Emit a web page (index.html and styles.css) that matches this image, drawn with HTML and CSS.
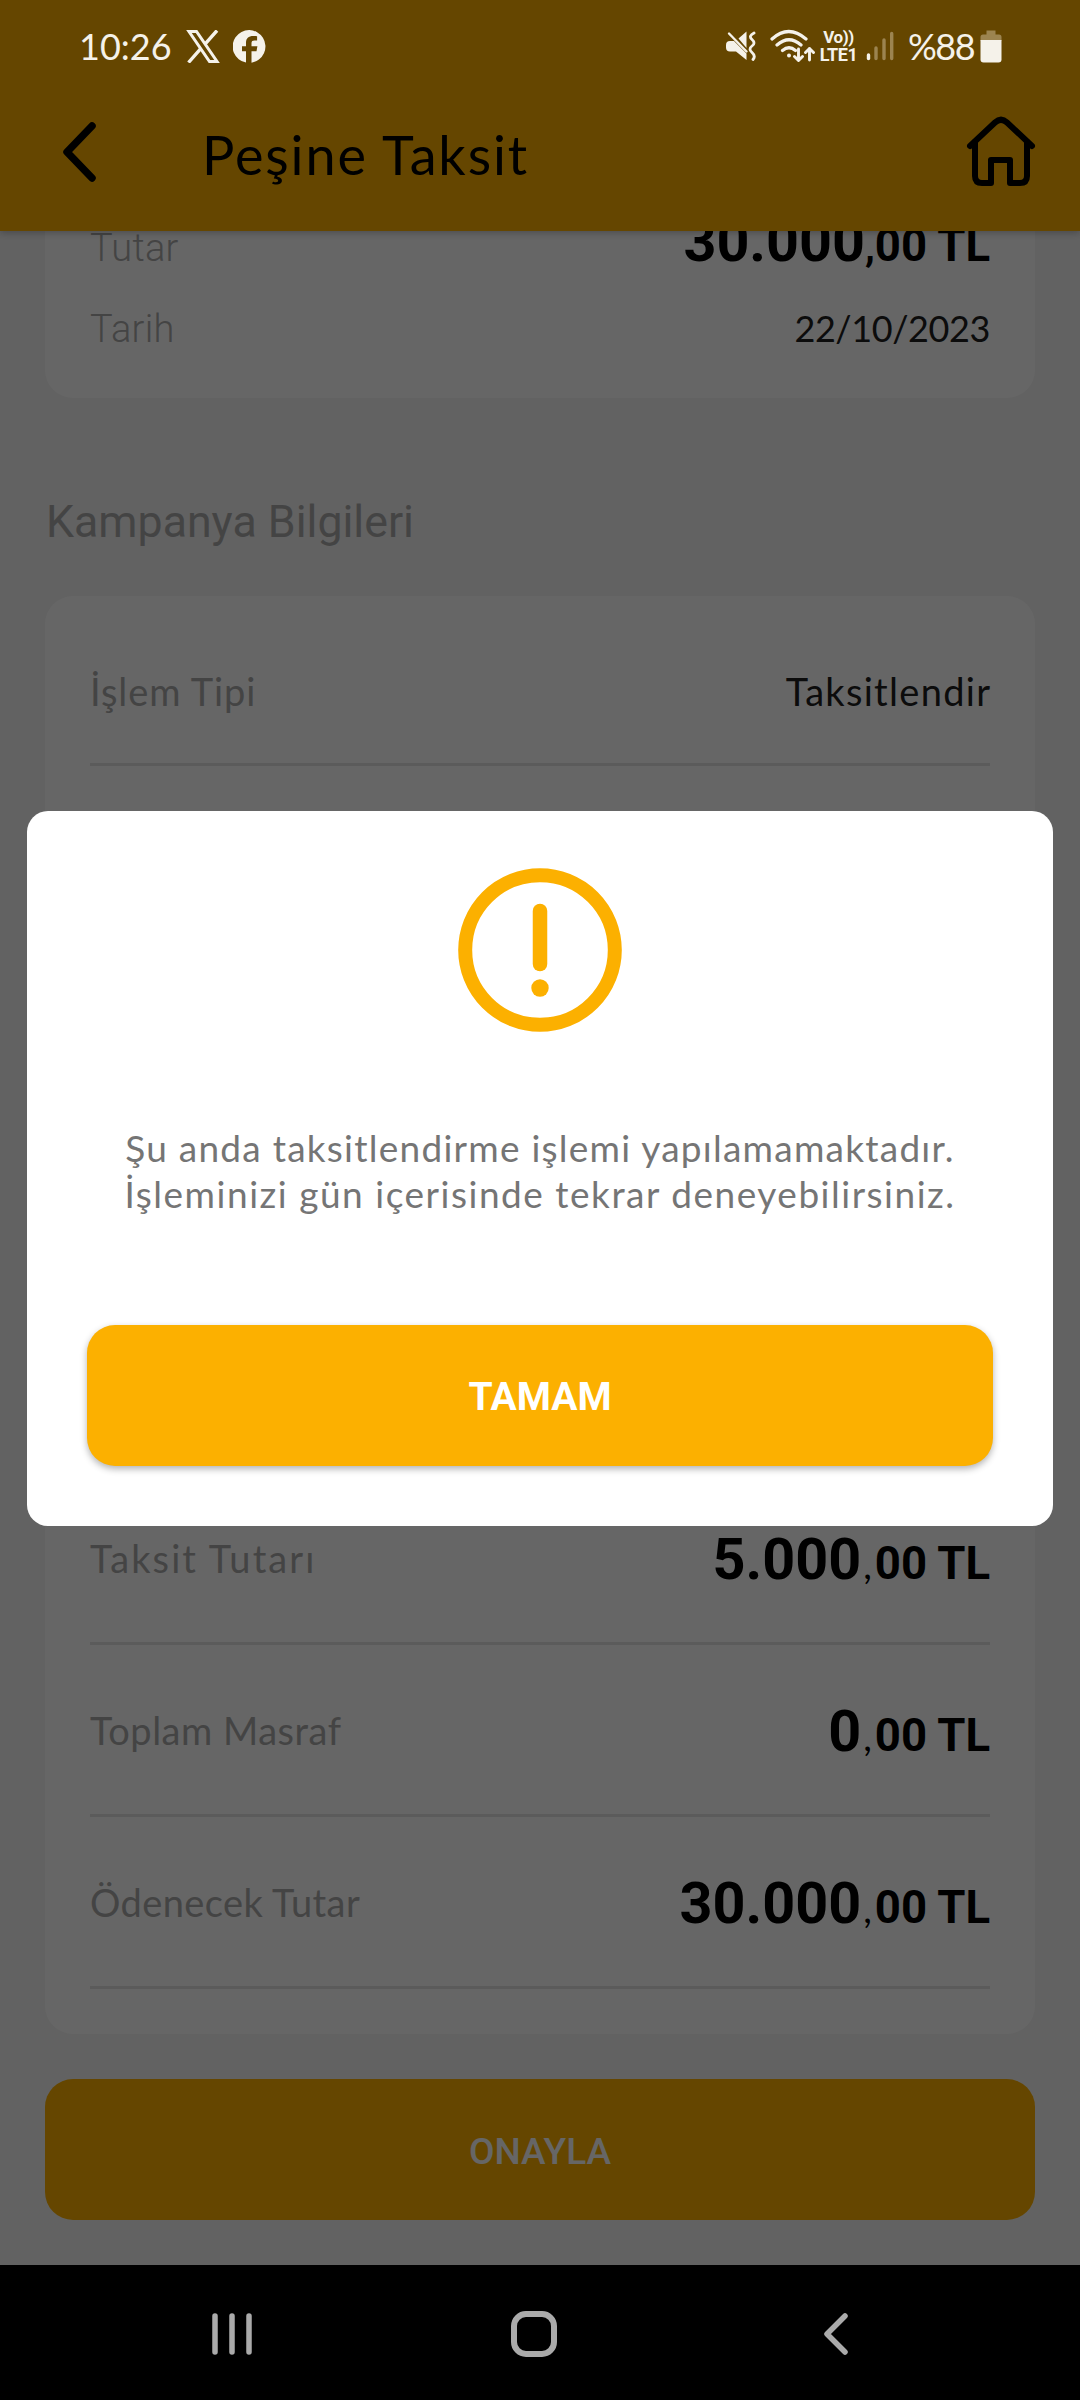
FILE: index.html
```html
<!DOCTYPE html>
<html lang="tr">
<head>
<meta charset="utf-8">
<title>Peşine Taksit</title>
<link rel="stylesheet" href="styles.css">
</head>
<body>
<div class="phone">
  <div class="app">
    <header class="toolbar">
      <svg class="back" width="34" height="60" viewBox="0 0 34 60"><path d="M30 4 5 30l25 26" fill="none" stroke="#000" stroke-width="7.5" stroke-linecap="round" stroke-linejoin="round"/></svg>
      <h1 class="title hand">Peşine Taksit</h1>
      <svg class="home" width="70" height="70" viewBox="0 0 70 70" fill="none" stroke="#000" stroke-width="6" stroke-linecap="round" stroke-linejoin="round"><path d="M4 30 29 6.500q6-5.500 12 0L66 30"/><path d="M9 26v34q0 7 7 7h9V44h19v23h10q7 0 7-7V26"/></svg>
    </header>
    <main class="content">
      <section class="card card-top">
        <div class="line"><span class="label-light">Tutar</span><span class="amount"><b>30.000</b><i class="comma-plain">,</i>00 TL</span></div>
        <div class="line"><span class="label-light">Tarih</span><span class="value hand date">22/10/2023</span></div>
      </section>
      <h2 class="section-title">Kampanya Bilgileri</h2>
      <section class="card card-info">
        <div class="row first"><span class="label hand l-type">İşlem Tipi</span><span class="value hand type">Taksitlendir</span></div>
        <div class="covered"></div>
        <div class="row"><span class="label hand l-inst">Taksit Tutarı</span><span class="amount"><b>5.000</b><i class="comma">,</i>00 TL</span></div>
        <div class="row"><span class="label hand l-cost">Toplam Masraf</span><span class="amount"><b>0</b><i class="comma">,</i>00 TL</span></div>
        <div class="row"><span class="label hand l-total">Ödenecek Tutar</span><span class="amount"><b>30.000</b><i class="comma">,</i>00 TL</span></div>
      </section>
      <button class="confirm">ONAYLA</button>
    </main>
    <div class="scrim">
      <div class="dialog">
        <svg class="alert" width="164" height="164" viewBox="0 0 164 164"><circle cx="82" cy="82" r="74.800" fill="none" stroke="#fcb000" stroke-width="14"/><path d="M82 43v53" stroke="#fcb000" stroke-width="14.500" stroke-linecap="round"/><circle cx="82" cy="120" r="8.700" fill="#fcb000"/></svg>
        <p class="message hand"><span class="m1">Şu anda taksitlendirme işlemi yapılamamaktadır.</span><br><span class="m2">İşleminizi gün içerisinde tekrar deneyebilirsiniz.</span></p>
        <button class="ok">TAMAM</button>
      </div>
    </div>
  </div>
  <div class="status">
    <span class="clock hand">10:26</span>
    <svg class="x-logo" width="34" height="33" viewBox="0 0 34 33"><path d="M3 1.500h7.500L31 31.500h-7.500z" fill="none" stroke="#f5f2ea" stroke-width="3"/><path d="M31 .5 18.800 14.300M14.500 18.800 2.500 32.500" stroke="#f5f2ea" stroke-width="3.400"/></svg>
    <svg class="fb" width="33" height="33" viewBox="0 0 33 33"><path fill="#f5f2ea" d="M13 32.600A16.400 16.400 0 1 1 18.500 32.700V21.200h5l.9-4.900h-5.900v-3.200c0-2 .9-2.700 2.900-2.700h2.700V6.300c-7.500-1.200-11.100.8-11.100 6.500v3.500H9v4.900h4z"/></svg>
    <span class="grow"></span>
    <svg class="mute" width="30" height="30" viewBox="0 0 30 30"><path fill="#f5f2ea" d="M4 10h4l12.500 12.500V29L10 20.500H4q-4 0-4-4V14q0-4 4-4zM12.500 7.500 20.500.5V17z"/><path d="m3 2.500 17.500 18" stroke="#f5f2ea" stroke-width="2.400" stroke-linecap="round"/><path d="M28 2q-6 3-2 6.500t0 6.500 0 6.500 1 7" fill="none" stroke="#f5f2ea" stroke-width="2.800" stroke-linecap="round"/></svg>
    <svg class="wifi" width="45" height="34" viewBox="0 0 45 34" fill="none" stroke="#f5f2ea" stroke-width="3.200" stroke-linecap="round" stroke-linejoin="round"><path d="M2 10q16.500-15 34 0M7 16q12-10.500 24 0M12.500 21.500q6.500-5.500 13 0"/><circle cx="19" cy="26.500" r="2" fill="#f5f2ea" stroke="none"/><path d="M28.500 20v11.500m-4-4 4 4 4-4M39.500 31V19.500m-4 4 4-4 4 4" stroke-width="2.900"/></svg>
    <span class="volte"><span class="vo">Vo))</span><span>LTE1</span></span>
    <svg class="signal" width="28" height="30" viewBox="0 0 28 30" stroke-width="3.400" stroke-linecap="round"><path d="M2.500 24v3.500" stroke="#f5f2ea"/><path d="M10 17v10.500M18 9v18.500M25.700 2.500v25" stroke="#9c8450"/></svg>
    <span class="percent hand">%88</span>
    <svg class="battery" width="22" height="33" viewBox="0 0 22 33"><path fill="#9c8450" d="M6.500.5h9v4H19q2.500 0 2.500 2.500v4H.5V7q0-2.500 2.500-2.500h3.500z"/><path fill="#f5f2ea" d="M.5 10h21v19.500q0 3-3 3h-15q-3 0-3-3z"/></svg>
  </div>
  <nav class="navbar">
    <svg width="42" height="46" viewBox="0 0 42 46" stroke="#aaa" stroke-width="5.500" stroke-linecap="round"><path d="M4 5v36M21 5v36M38 5v36"/></svg>
    <svg class="nav-home" width="46" height="46" viewBox="0 0 46 46"><rect x="3" y="3" width="40" height="40" rx="12" fill="none" stroke="#aaa" stroke-width="6"/></svg>
    <svg width="27" height="46" viewBox="0 0 27 46"><path d="M23 5 5 23l18 18" fill="none" stroke="#aaa" stroke-width="5.500" stroke-linecap="round" stroke-linejoin="round"/></svg>
  </nav>
</div>
</body>
</html>
```
FILE: styles.css
```css
* { box-sizing: border-box; }
body { margin: 0; font-family: Roboto, sans-serif; }
svg { display: block; flex: none; }
h1, h2, p { margin: 0; font-weight: 400; }
i { font-style: normal; }
button { border: 0; padding: 3px 0 0; display: block; font-family: Roboto, sans-serif; color: #fff; background: #fcb000; }
.hand { font-family: Lato, sans-serif; white-space: nowrap; }

.phone { position: relative; width: 1080px; height: 2400px; overflow: hidden; display: flex; flex-direction: column; background: #000; }
.app { position: relative; height: 2265px; display: flex; flex-direction: column; background: #f5f5f5; }

.toolbar { position: relative; z-index: 1; flex: none; height: 231px; padding: 116px 44px 0 62px; display: flex; align-items: flex-start; background: #fcb000; box-shadow: 0 2px 7px rgba(0, 0, 0, .25); }
.back { margin-top: 6px; }
.title { margin: 4px 0 0 106px; font-size: 54px; line-height: 70px; color: #000; flex: 1; letter-spacing: 1.9px; }

.content { flex: 1; padding: 0 45px; }
.card { background: #fff; border-radius: 28px; padding: 0 45px; }
.card-top { height: 167px; border-radius: 0 0 28px 28px; display: flex; flex-direction: column; justify-content: flex-end; padding-bottom: 39px; }
.line { flex: none; display: flex; justify-content: space-between; align-items: baseline; height: 87px; line-height: 60px; }
.line:last-child { height: 60px; }
.label-light { font-size: 38px; font-weight: 300; color: #aaa; letter-spacing: .3px; }
.section-title { height: 198px; padding: 92px 0 0 1px; font-size: 44.7px; line-height: 64px; color: #aaa; }
.card-info { height: 1438px; }
.row { height: 172px; border-bottom: 3px solid #e4e4e4; display: flex; justify-content: space-between; align-items: flex-start; padding-top: 60px; }
.row.first { height: 170px; padding-top: 70px; }
.covered { height: 707px; }
.label { font-size: 38px; line-height: 50px; color: #aaa; }
.l-type { letter-spacing: .9px; }
.l-inst { letter-spacing: 2.1px; }
.l-cost { letter-spacing: .5px; }
.l-total { letter-spacing: .4px; }
.value { font-size: 38px; line-height: 50px; color: #202020; }
.type { letter-spacing: 1.3px; margin-right: -1.3px; }
.date { font-size: 36px; letter-spacing: -.4px; }
.amount { font-size: 45.5px; line-height: 60px; font-weight: 700; color: #000; white-space: nowrap; }
.row .amount { margin-top: -3px; }
.amount b { font-size: 57.5px; font-weight: 700; }
.comma-plain { font-size: 40px; }
.comma { font-family: Lato, sans-serif; font-size: 38px; font-weight: 400; padding: 0 3px 0 2px; }
.confirm { width: 990px; height: 141px; margin-top: 45px; border-radius: 28px; font-size: 37px; font-weight: 500; }

.scrim { position: absolute; inset: 0; z-index: 2; background: rgba(0, 0, 0, .6); display: flex; flex-direction: column; align-items: center; padding-top: 811px; }
.dialog { width: 1026px; height: 715px; border-radius: 21px; background: #fff; display: flex; flex-direction: column; align-items: center; padding-top: 57px; }
.message { margin-top: 93px; height: 91px; font-size: 37px; line-height: 46px; text-align: center; color: #757575; }
.m1 { letter-spacing: 1.25px; }
.m2 { letter-spacing: 1.52px; }
.ok { width: 906px; height: 141px; margin-top: 109px; border-radius: 28px; font-size: 39px; font-weight: 700; box-shadow: 0 3px 7px rgba(0, 0, 0, .3); }

.status { position: absolute; z-index: 3; left: 0; top: 0; width: 1080px; height: 92px; padding: 0 78px 0 79px; display: flex; align-items: center; color: #f5f2ea; }
.clock { font-size: 36px; width: 107px; }
.fb { margin-left: 13px; }
.grow { flex: 1; }
.wifi { margin-left: 14px; }
.volte { width: 37px; margin-left: 5px; display: flex; flex-direction: column; font-size: 18px; line-height: 17px; font-weight: 700; align-items: center; white-space: nowrap; letter-spacing: -.4px; }
.vo { font-size: 17px; }
.signal { margin-left: 9px; }
.percent { margin-left: 14px; width: 72px; font-size: 36px; letter-spacing: -1.5px; }

.navbar { height: 135px; display: flex; padding: 46px 231px 0 211px; justify-content: space-between; }
.nav-home { margin-right: 7px; }
```
